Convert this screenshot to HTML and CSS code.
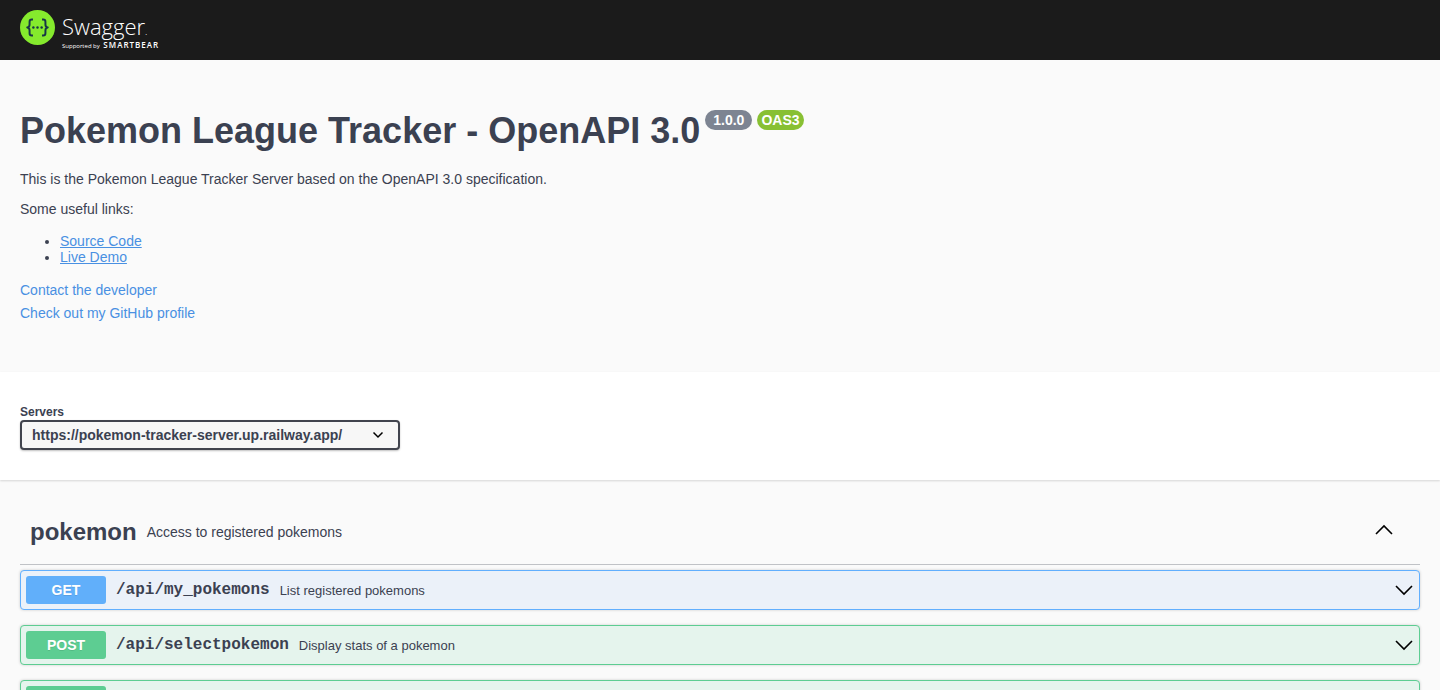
FILE: index.html
```html
<!DOCTYPE html>
<html lang="en">
<head>
<meta charset="utf-8">
<title>Swagger UI</title>
<link rel="stylesheet" href="styles.css">
</head>
<body>
<header class="topbar">
  <a class="brand" href="#">
    <svg class="brand-mark" viewBox="0 0 34 34" aria-hidden="true">
      <circle cx="17" cy="17" r="17" fill="#85ea2d"/>
      <g fill="none" stroke="#173647" stroke-width="1.9" stroke-linejoin="round">
        <path d="M12.6 9.3h-1.1c-1.6 0-2.2.8-2.2 2.2v2.6c0 1.7-.6 2.7-2.3 2.9 1.7.2 2.3 1.2 2.3 2.9v2.6c0 1.4.6 2.2 2.2 2.2h1.1"/>
        <path d="M21.4 9.3h1.1c1.6 0 2.2.8 2.2 2.2v2.6c0 1.7.6 2.7 2.3 2.9-1.7.2-2.3 1.2-2.3 2.9v2.6c0 1.4-.6 2.2-2.2 2.2h-1.1"/>
      </g>
      <g fill="#173647"><circle cx="13" cy="17" r="1.2"/><circle cx="17" cy="17" r="1.2"/><circle cx="21" cy="17" r="1.2"/></g>
    </svg>
    <span class="brand-text">
      <span class="brand-name">Swagger<span class="brand-dot">.</span></span>
      <span class="brand-by">Supported by <b class="brand-owner">SMARTBEAR</b></span>
    </span>
  </a>
</header>
<main>
  <section class="info">
    <div class="title-row">
      <h1 class="title">Pokemon League Tracker - OpenAPI 3.0</h1>
      <span class="badge">1.0.0</span>
      <span class="badge badge-oas">OAS3</span>
    </div>
    <p class="text">This is the Pokemon League Tracker Server based on the OpenAPI 3.0 specification.</p>
    <p class="text">Some useful links:</p>
    <ul class="links">
      <li><a class="link" href="#">Source Code</a></li>
      <li><a class="link" href="#">Live Demo</a></li>
    </ul>
    <div class="contact">
      <a class="contact-link" href="#">Contact the developer</a>
      <a class="contact-link" href="#">Check out my GitHub profile</a>
    </div>
  </section>
  <section class="servers">
    <label class="servers-label" for="server">Servers</label>
    <div class="select-wrap">
      <select class="servers-select" id="server">
        <option>https://pokemon-tracker-server.up.railway.app/</option>
      </select>
      <svg class="select-arrow" viewBox="0 0 12 8" aria-hidden="true"><path d="M1.5 1.5 6 6l4.5-4.5"/></svg>
    </div>
  </section>
  <section class="operations">
    <div class="tag">
      <h2 class="tag-name">pokemon</h2>
      <p class="tag-text">Access to registered pokemons</p>
      <button class="toggle" type="button" aria-label="Collapse pokemon"><svg class="chevron" viewBox="0 0 20 12"><path d="M2 10 10 2l8 8"/></svg></button>
    </div>
    <div class="list">
      <button class="op op-get" type="button">
        <span class="method">GET</span>
        <span class="path">/api/my_pokemons</span>
        <span class="summary">List registered pokemons</span>
        <svg class="chevron" viewBox="0 0 20 12" aria-hidden="true"><path d="M2 2 10 10l8-8"/></svg>
      </button>
      <button class="op op-post" type="button">
        <span class="method">POST</span>
        <span class="path">/api/selectpokemon</span>
        <span class="summary">Display stats of a pokemon</span>
        <svg class="chevron" viewBox="0 0 20 12" aria-hidden="true"><path d="M2 2 10 10l8-8"/></svg>
      </button>
      <button class="op op-post" type="button" aria-label="POST operation">
        <span class="method"></span>
      </button>
    </div>
  </section>
</main>
</body>
</html>
```

FILE: styles.css
```css
* { box-sizing: border-box; }

html { overflow: hidden; }

body {
  margin: 0;
  height: 100vh;
  overflow: hidden;
  background: #fafafa;
  color: #3b4151;
  font-family: "Liberation Sans", Arial, sans-serif;
  font-size: 14px;
  line-height: 16px;
}

.topbar {
  height: 60px;
  padding: 10px 20px;
  background: #1b1b1b;
}

.brand {
  display: inline-flex;
  gap: 7px;
  color: #fff;
  text-decoration: none;
  font-family: "Open Sans", sans-serif;
}

.brand-mark { width: 35px; height: 35px; }

.brand-text { display: flex; flex-direction: column; gap: 3px; padding-top: 4px; }

.brand-name { height: 24px; font-size: 22px; font-weight: 300; line-height: 24px; }

.brand-dot { font-size: 10px; line-height: 1; }

.brand-by { font-size: 6px; line-height: 8px; white-space: nowrap; }

.brand-owner { margin-left: 2px; font-size: 8px; font-weight: 600; letter-spacing: 1px; }

.info { padding: 50px 20px 51px; }

.title-row { display: flex; align-items: flex-start; gap: 5px; margin-bottom: 20px; }

.title { margin: 0; font-size: 36px; line-height: 41px; }

.badge {
  padding: 2px 8px;
  border-radius: 20px;
  background: #7d8492;
  color: #fff;
  font-weight: bold;
}

.badge-oas { padding: 2px 4px; background: #88c033; }

.text { margin: 0 0 14px; }

.links { margin: 16px 0; padding-left: 40px; }

.link { color: #4990e2; }

.contact { display: flex; flex-direction: column; align-items: flex-start; gap: 7px; padding-top: 1px; }

.contact-link { color: #4990e2; text-decoration: none; }

.servers {
  padding: 32px 20px 30px;
  background: #fff;
  box-shadow: 0 1px 2px rgba(0, 0, 0, 0.15);
}

.servers-label { display: block; font-size: 12px; font-weight: bold; }

.select-wrap { position: relative; width: 380px; max-width: 100%; }

.servers-select {
  display: block;
  width: 100%;
  height: 30px;
  padding: 0 40px 0 10px;
  appearance: none;
  border: 2px solid #41444e;
  border-radius: 4px;
  background: #f7f7f7;
  box-shadow: 0 1px 2px rgba(0, 0, 0, 0.25);
  color: #3b4151;
  font: bold 14px "Liberation Sans", Arial, sans-serif;
}

.select-arrow {
  position: absolute;
  top: 11px;
  right: 16px;
  width: 12px;
  height: 8px;
  fill: none;
  stroke: #000;
  stroke-width: 1.5;
  pointer-events: none;
}

.operations { padding: 20px 20px 0; }

.tag {
  display: flex;
  align-items: center;
  height: 65px;
  padding: 0 26px 0 10px;
  border-bottom: 1px solid rgba(59, 65, 81, 0.3);
}

.tag-name { margin: 0 10px 0 0; font-size: 24px; line-height: 28px; }

.tag-text { margin: 0; flex: 1; }

.toggle { display: flex; padding: 0 0 4px; border: 0; background: none; }

.chevron {
  width: 20px;
  height: 12px;
  margin-left: auto;
  fill: none;
  stroke: #000;
  stroke-width: 1.6;
}

.list { display: flex; flex-direction: column; gap: 15px; padding-top: 5px; }

.op {
  display: flex;
  align-items: center;
  flex: none;
  gap: 10px;
  width: 100%;
  height: 40px;
  padding: 5px;
  border: 1px solid;
  border-radius: 4px;
  box-shadow: 0 0 3px rgba(0, 0, 0, 0.19);
  color: #3b4151;
  font: 13px "Liberation Sans", Arial, sans-serif;
  text-align: left;
}

.op-get { border-color: #61affe; background: #ebf1f9; }

.op-post { border-color: #5dcd92; background: #e5f4ed; }

.method {
  width: 80px;
  height: 28px;
  border-radius: 3px;
  color: #fff;
  font-size: 14px;
  font-weight: bold;
  line-height: 28px;
  text-align: center;
  text-shadow: 0 1px 0 rgba(0, 0, 0, 0.1);
}

.op-get .method { background: #61affa; }

.op-post .method { background: #5dcd92; }

.path { font: bold 16px "Liberation Mono", "Courier New", monospace; }
```
